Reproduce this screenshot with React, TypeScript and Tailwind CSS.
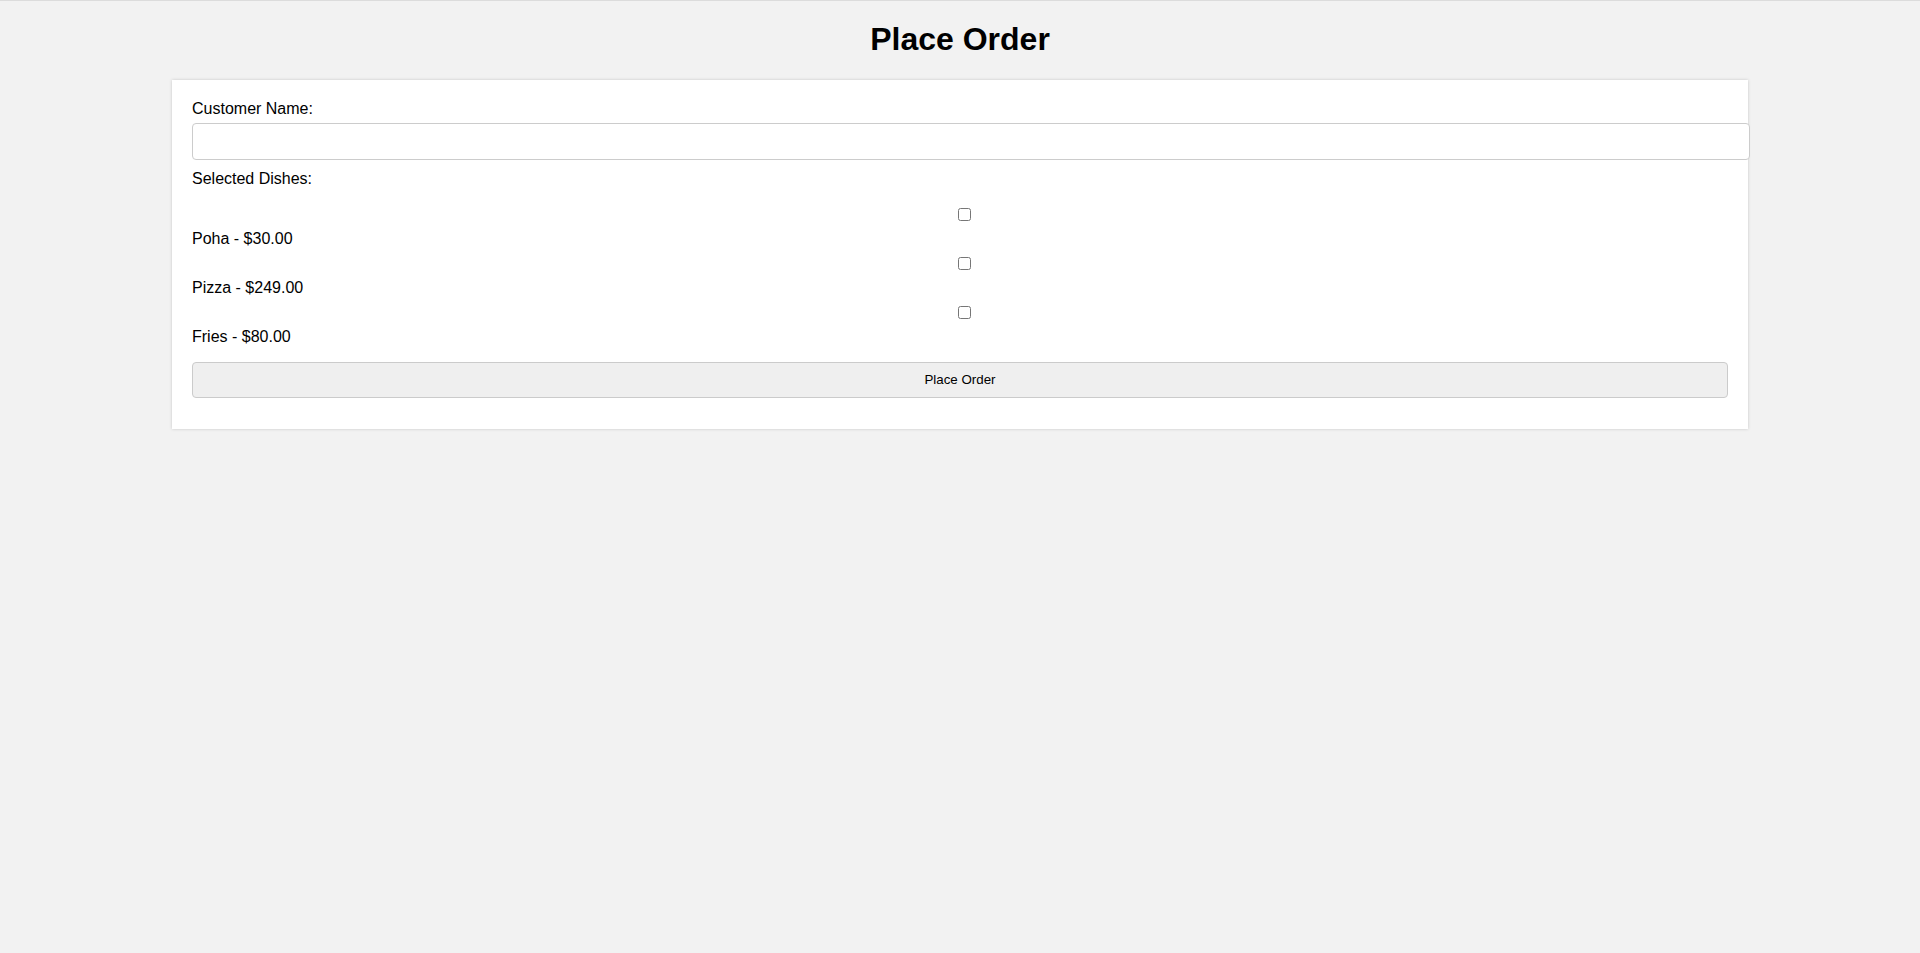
import { useState } from 'react';

const dishes = [
  { id: 1, name: 'Poha', price: 30 },
  { id: 2, name: 'Pizza', price: 249 },
  { id: 3, name: 'Fries', price: 80 },
];

export default function App() {
  const [customer, setCustomer] = useState('');
  const [selected, setSelected] = useState<number[]>([]);

  const toggle = (id: number) => {
    setSelected((prev) => (prev.includes(id) ? prev.filter((d) => d !== id) : [...prev, id]));
  };

  return (
    <div className="min-h-screen bg-[#f2f2f2] border-t border-[#dcdcdc] font-['Liberation_Sans',Arial,sans-serif] text-black">
      <h1 className="pt-[20px] mb-[22px] text-center text-[32px] font-bold leading-[37px]">Place Order</h1>

      <form
        className="mx-auto w-[1576px] bg-white px-5 pt-5 pb-[31px] shadow-[0_0_3px_rgba(0,0,0,0.18)]"
        onSubmit={(e) => e.preventDefault()}
      >
        {/* Customer */}
        <label className="block text-base leading-[18px]">Customer Name:</label>
        <input
          type="text"
          value={customer}
          onChange={(e) => setCustomer(e.target.value)}
          className="mt-[5px] block h-[37px] w-[1558px] rounded-[4px] border border-[#cccccc] bg-white px-[10px] text-base outline-none"
        />

        {/* Dishes */}
        <label className="mt-[10px] block text-base leading-[18px]">Selected Dishes:</label>
        <div className="mt-[11px]">
          {dishes.map((dish) => (
            <div key={dish.id}>
              <div className="flex h-[31px] items-center justify-center pl-[8px]">
                <input
                  type="checkbox"
                  checked={selected.includes(dish.id)}
                  onChange={() => toggle(dish.id)}
                  className="m-0 h-[13px] w-[13px]"
                />
              </div>
              <div className="text-base leading-[18px]">
                {dish.name} - ${dish.price.toFixed(2)}
              </div>
            </div>
          ))}
        </div>

        <button
          type="submit"
          className="mt-[16px] block h-[36px] w-full rounded-[4px] border border-[#cbcbcb] bg-[#efefef] text-[13.33px] text-black"
        >
          Place Order
        </button>
      </form>
    </div>
  );
}
